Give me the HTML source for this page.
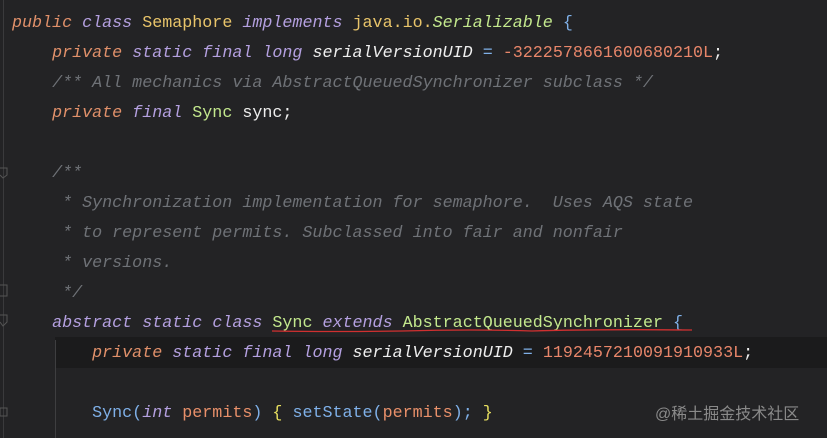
<!DOCTYPE html>
<html><head><meta charset="utf-8"><style>
html,body{margin:0;padding:0;}
body{width:827px;height:438px;background:#232325;overflow:hidden;position:relative;font-family:"Liberation Mono",monospace;font-size:16.7px;}
.l{position:absolute;left:12px;height:30px;line-height:30px;white-space:pre;color:#d4d4d4;}
.k{color:#e0906a;font-style:italic}
.p{color:#b4a0e0;font-style:italic}
.t{color:#e8c46a}
.g{color:#c3e88d}
.gi{color:#c3e88d;font-style:italic}
.w{color:#eeeeee}
.wi{color:#eeeeee;font-style:italic}
.n{color:#e8866a}
.c{color:#6f7277;font-style:italic}
.b{color:#7fb0e8}
.o{color:#e8906a}
.y{color:#e8e060}
.hl{position:absolute;left:55px;top:337px;width:772px;height:31px;background:#1b1b1c;}
.gut{position:absolute;left:3px;top:0;width:1px;height:438px;background:#3a3a3c;}
.guide{position:absolute;left:55px;top:340px;width:1px;height:98px;background:#3e3e40;}
.wm{position:absolute;left:655px;top:400px;font-family:"Liberation Sans","Noto Sans CJK SC",sans-serif;font-size:16px;color:#8a8a8a;}
.ul{position:absolute;left:272px;top:328px;}
</style></head><body>
<div class="gut"></div>
<div class="hl"></div>
<div class="guide"></div>
<div class="l" style="top:9px"><span class="k">public</span> <span class="p">class</span> <span class="t">Semaphore</span> <span class="p">implements</span> <span class="t">java.io.</span><span class="gi">Serializable</span> <span class="b">{</span></div>
<div class="l" style="top:39px">    <span class="k">private</span> <span class="p">static</span> <span class="p">final</span> <span class="p">long</span> <span class="wi">serialVersionUID</span> <span class="b">=</span> <span class="n">-3222578661600680210L</span><span class="w">;</span></div>
<div class="l" style="top:69px">    <span class="c">/** All mechanics via AbstractQueuedSynchronizer subclass */</span></div>
<div class="l" style="top:99px">    <span class="k">private</span> <span class="p">final</span> <span class="g">Sync</span> <span class="w">sync;</span></div>
<div class="l" style="top:159px">    <span class="c">/**</span></div>
<div class="l" style="top:189px">    <span class="c"> * Synchronization implementation for semaphore.  Uses AQS state</span></div>
<div class="l" style="top:219px">    <span class="c"> * to represent permits. Subclassed into fair and nonfair</span></div>
<div class="l" style="top:249px">    <span class="c"> * versions.</span></div>
<div class="l" style="top:279px">    <span class="c"> */</span></div>
<div class="l" style="top:309px">    <span class="p">abstract</span> <span class="p">static</span> <span class="p">class</span> <span class="g">Sync</span> <span class="p">extends</span> <span class="g">AbstractQueuedSynchronizer</span> <span class="b">{</span></div>
<div class="l" style="top:339px">        <span class="k">private</span> <span class="p">static</span> <span class="p">final</span> <span class="p">long</span> <span class="wi">serialVersionUID</span> <span class="b">=</span> <span class="n">1192457210091910933L</span><span class="w">;</span></div>
<div class="l" style="top:399px">        <span class="b">Sync(</span><span class="p">int</span> <span class="o">permits</span><span class="b">)</span> <span class="y">{</span> <span class="b">setState(</span><span class="o">permits</span><span class="b">);</span> <span class="y">}</span></div>
<svg class="ul" width="420" height="6"><path d="M0 3 Q60 4 130 3 Q200 1 260 3 Q320 1 420 2" stroke="#d03030" stroke-width="1.3" fill="none"/></svg>
<svg style="position:absolute;left:0;top:0" width="14" height="438"><g stroke="#555" fill="none" stroke-width="1"><path d="M0 168 L7 168 L7 175 L3 178 L0 175"/><path d="M0 285 L7 285 L7 296 L0 296"/><path d="M0 315 L7 315 L7 322 L3 326 L0 322"/><rect x="0" y="408" width="7" height="8"/></g></svg>
<div class="wm">@稀土掘金技术社区</div>
</body></html>
